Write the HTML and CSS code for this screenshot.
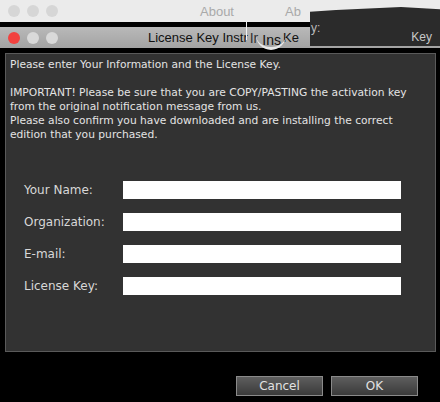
FILE: index.html
```html
<!DOCTYPE html>
<html lang="en">
<head>
  <meta charset="UTF-8" />
  <title>License Key Instructions</title>
  <link rel="stylesheet" href="styles.css">
</head>
<body>
  <div class="back-bar">
    <span class="dot"></span>
    <span class="dot"></span>
    <span class="dot"></span>
    <span class="back-title">About</span>
    <span class="back-title second">Ab</span>
  </div>

  <div class="window">
    <div class="titlebar">
      <span class="dot red"></span>
      <span class="dot light"></span>
      <span class="dot light"></span>
      <span class="title main">License Key Instr</span>
      <span class="title ghost">Ir</span>
      <span class="title low">Ins</span>
      <span class="title tail">Ke</span>
    </div>

    <div class="panel">
      <p class="info">Please enter Your Information and the License Key.</p>
      <p class="info">IMPORTANT! Please be sure that you are COPY/PASTING the activation key
        from the original notification message from us.<br>
        Please also confirm you have downloaded and are installing the correct
        edition that you purchased.</p>

      <div class="form">
        <label for="name">Your Name:</label>
        <input id="name" type="text" />
        <label for="org">Organization:</label>
        <input id="org" type="text" />
        <label for="email">E-mail:</label>
        <input id="email" type="text" />
        <label for="key">License Key:</label>
        <input id="key" type="text" />
      </div>
    </div>

    <div class="actions">
      <button>Cancel</button>
      <button>OK</button>
    </div>
  </div>

  <!-- stuff from the window behind, bleeding through -->
  <div class="smudge">
    <span class="smudge-y">y:</span>
    <span class="smudge-key">Key</span>
  </div>
  <div class="cursor-line"></div>
  <div class="spinner"></div>
</body>
</html>
```

FILE: styles.css
```css
* {
  box-sizing: border-box;
}

body {
  margin: 0;
  background: #000;
  width: 440px;
  height: 402px;
  overflow: hidden;
  font-family: 'DejaVu Sans', sans-serif;
}

.back-bar {
  height: 22px;
  background: #ebebeb;
  display: flex;
  align-items: center;
  padding-left: 8px;
  gap: 7px;
}

.dot {
  width: 12px;
  height: 12px;
  border-radius: 50%;
  background: #d6d6d6;
  flex: none;
}

.back-title {
  font-family: 'Liberation Sans', sans-serif;
  font-size: 13px;
  color: #a9a9a9;
  margin-left: 135px;
}

.back-title.second {
  margin-left: 44px;
}

.window {
  padding-top: 5px;
}

.titlebar {
  height: 21px;
  background: linear-gradient(#b9b9b9, #a3a3a3);
  display: flex;
  align-items: center;
  padding-left: 8px;
  gap: 7px;
}

.dot.red {
  background: #f2423f;
}

.dot.light {
  background: #d9d9d9;
}

.title {
  font-family: 'Liberation Sans', sans-serif;
  font-size: 13px;
  color: #111;
  white-space: nowrap;
}

.title.main {
  margin-left: 83px;
}

.title.ghost {
  margin-left: -5px;
  font-size: 14px;
  color: #333;
}

.title.low {
  margin-left: -3px;
  padding-top: 5px;
  font-size: 14px;
}

.title.tail {
  margin-left: -5px;
}

.panel {
  margin: 5px 4px 0 5px;
  height: 299px;
  background: #323232;
  border: 1px solid #5a5a5a;
  padding: 4px 4px 0;
}

.info {
  margin: 0 0 14px;
  font-size: 10.7px;
  line-height: 14px;
  color: #e4e4e4;
}

.form {
  display: grid;
  grid-template-columns: 99px 278px;
  row-gap: 14px;
  margin-top: 39px;
  margin-left: 14px;
}

.form label {
  font-size: 12px;
  color: #d8d8d8;
  align-self: center;
}

.form input {
  height: 18px;
  border: none;
  background: #fff;
  margin: 0;
  padding: 0 4px;
}

.actions {
  display: flex;
  justify-content: flex-end;
  gap: 8px;
  margin-top: 24px;
  padding-right: 22px;
}

.actions button {
  width: 87px;
  height: 20px;
  padding: 0;
  border: 1px solid #8a8a8a;
  background: linear-gradient(#5e5e5e, #3a3a3a);
  color: #e2e2e2;
  font-family: 'DejaVu Sans', sans-serif;
  font-size: 12px;
}

.smudge {
  position: absolute;
  left: 310px;
  top: 7px;
  width: 130px;
  height: 39px;
  background: #2b2b2b;
  clip-path: polygon(0 12%, 20% 8%, 45% 4%, 70% 0, 100% 6%, 100% 100%, 0 100%);
}

.smudge-y {
  position: absolute;
  left: 1px;
  top: 14px;
  font-family: 'Liberation Sans', sans-serif;
  font-size: 12px;
  color: #bbb;
}

.smudge-key {
  position: absolute;
  right: 8px;
  bottom: 2px;
  font-family: 'Liberation Sans', sans-serif;
  font-size: 12px;
  color: #c8c8c8;
}

.cursor-line {
  position: absolute;
  left: 246px;
  top: 22px;
  width: 1px;
  height: 18px;
  background: #f0f0f0;
}

.spinner {
  position: absolute;
  left: 256px;
  top: 34px;
  width: 30px;
  height: 16px;
  border-bottom: 3px solid #e8e8e8;
  border-radius: 0 0 15px 15px;
}
```
